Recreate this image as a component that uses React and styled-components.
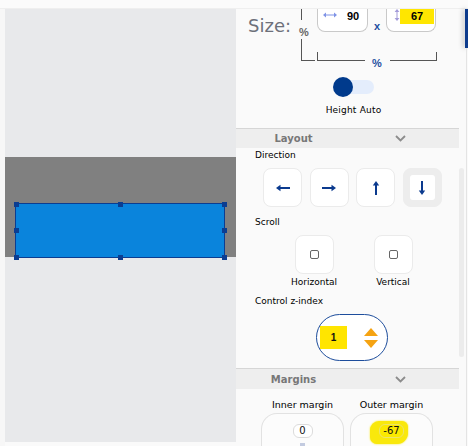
import React from 'react';
import styled, { createGlobalStyle } from 'styled-components';

const GlobalStyle = createGlobalStyle`
  html, body {
    margin: 0;
    padding: 0;
    background: #fafafa;
  }
  body {
    font-family: "DejaVu Sans", "Liberation Sans", sans-serif;
    color: #111;
  }
  * {
    box-sizing: border-box;
  }
`;

const Page = styled.div`
  width: 468px;
  height: 446px;
  display: flex;
  flex-direction: column;
  overflow: hidden;
  background: #fafafa;
`;

const TopBar = styled.div`
  flex: none;
  height: 9px;
  background: #fbfbfb;
  border-bottom: 1px solid #efefef;
`;

const Workspace = styled.div`
  flex: 1;
  display: flex;
  min-height: 0;
`;

const Gutter = styled.div`
  width: 5px;
  background: #f7f7f7;
`;

const Canvas = styled.div`
  width: 231px;
  height: 433px;
  padding-top: 148px;
  background: #e8e9eb;
`;

const Container = styled.div`
  height: 100px;
  padding: 46px 0 0 10px;
  background: #808080;
`;

const Selected = styled.div`
  position: relative;
  width: 210px;
  height: 55px;
  background: #0a84dc;
  border: 1px solid #0b3d91;
`;

const handleX = { l: 'left: -2px;', c: 'left: calc(50% - 2.5px);', r: 'right: -3px;' };
const handleY = { t: 'top: -2px;', m: 'top: calc(50% - 2.5px);', b: 'bottom: -3px;' };

const Handle = styled.span`
  position: absolute;
  width: 5px;
  height: 5px;
  background: #0b3d91;
  ${({ $x }) => handleX[$x]}
  ${({ $y }) => handleY[$y]}
`;

const Panel = styled.div`
  width: 229px;
  display: flex;
`;

const PanelBody = styled.div`
  width: 223px;
  display: flex;
  flex-direction: column;
  overflow: hidden;

  & > * {
    flex-shrink: 0;
  }
`;

const ScrollTrack = styled.div`
  width: 6px;
  padding-top: 159px;
`;

const ScrollThumb = styled.div`
  width: 5px;
  height: 189px;
  border-radius: 3px;
  background: #ececec;
`;

const RightEdge = styled.div`
  width: 3px;
  display: flex;
  flex-direction: column;
`;

const EdgeTab = styled.div`
  height: 39px;
  background: #0d3b8c;
  box-shadow: -2px 0 5px rgba(0, 0, 0, 0.25);
`;

const EdgeRest = styled.div`
  flex: 1;
  margin-left: 1px;
  border-left: 1px solid #e4e4e4;
`;

/* ---------- size ---------- */

const SizeSection = styled.section`
  height: 120px;
  padding-left: 12px;
  display: flex;
  flex-direction: column;
  border-bottom: 1px solid #d6d6d6;
`;

const SizeRow = styled.div`
  display: flex;
  align-items: flex-start;
`;

const SizeLabel = styled.div`
  width: 53px;
  margin-top: 8px;
  font-size: 18px;
  line-height: 18px;
  color: #6d707a;
`;

const BracketV = styled.div`
  width: 15px;
  height: 52px;
  display: flex;
  flex-direction: column;
`;

const VSeg = styled.div`
  height: ${({ $h }) => $h}px;
  border-left: 1px solid #555;
  ${({ $foot }) => $foot && 'border-bottom: 1px solid #555; width: 14px;'}
`;

const Unit = styled.div`
  font-family: "Liberation Sans", Arial, sans-serif;
  font-weight: bold;
  font-size: 11px;
  line-height: 12px;
  color: ${({ $blue }) => ($blue ? '#1d4f9f' : '#666')};
`;

const VUnit = styled(Unit)`
  height: 19px;
  padding-top: 6px;
  margin-left: -2px;
`;

const SizeFields = styled.div`
  width: 120px;
  margin-left: 1px;
  display: flex;
  flex-direction: column;
`;

const FieldsRow = styled.div`
  display: flex;
  height: 23px;
`;

const SizeField = styled.div`
  width: ${({ $w }) => $w}px;
  height: 23px;
  display: flex;
  align-items: flex-start;
  padding-left: ${({ $pad }) => $pad}px;
  background: #fff;
  border: 1px solid #c9c9c9;
  border-top: none;
  border-radius: 0 0 8px 8px;
`;

const FieldIcon = styled.svg`
  flex: none;
  margin-top: ${({ $top }) => $top}px;
`;

const FieldValue = styled.div`
  font-family: "Liberation Sans", Arial, sans-serif;
  font-weight: bold;
  font-size: 11px;
  line-height: 14px;
  color: #000;
  ${({ $mark }) =>
    $mark
      ? 'flex: 1; height: 15px; margin-right: 1px; text-align: center; background: #ffe600;'
      : 'margin-left: 10px;'}
`;

const Times = styled.div`
  width: 18px;
  padding-top: 11px;
  text-align: center;
  font-family: "Liberation Sans", Arial, sans-serif;
  font-weight: bold;
  font-size: 11px;
  line-height: 12px;
  color: #1d4f9f;
`;

const BracketH = styled.div`
  display: flex;
  align-items: flex-start;
  height: 15px;
  margin-top: 20px;
`;

const HSeg = styled.div`
  flex: 1;
  height: 9px;
  border-bottom: 1px solid #555;
  ${({ $side }) => `border-${$side}: 1px solid #555;`}
`;

const HUnit = styled(Unit)`
  width: 25px;
  padding-top: 5px;
  text-align: center;
`;

const Toggle = styled.div`
  align-self: center;
  margin: 13px 0 0 2px;
  width: 38px;
  height: 14px;
  display: flex;
  align-items: center;
  border-radius: 7px;
  background: #e4edfc;
`;

const Knob = styled.div`
  flex: none;
  width: 20px;
  height: 20px;
  margin-left: -3px;
  border-radius: 50%;
  background: #003a8c;
`;

const ToggleLabel = styled.div`
  align-self: center;
  margin-top: 11px;
  font-size: 9px;
  line-height: 11px;
  letter-spacing: 0.2px;
  color: #000;
`;

/* ---------- section headers ---------- */

const SectionHeader = styled.div`
  height: ${({ $h }) => $h}px;
  display: grid;
  grid-template-columns: 115px 1fr;
  align-items: center;
  background: #eeeeee;
`;

const HeaderTitle = styled.div`
  text-align: center;
  font-weight: bold;
  font-size: 10px;
  color: #777;
`;

const Chevron = styled.svg`
  justify-self: center;
  margin-right: 10px;
`;

/* ---------- layout ---------- */

const LayoutSection = styled.section`
  height: 221px;
  padding-top: 2px;
  display: flex;
  flex-direction: column;
  border-bottom: 1px solid #d6d6d6;
`;

const FieldLabel = styled.div`
  padding-left: 19px;
  margin-top: ${({ $top }) => $top || 0}px;
  font-size: 9px;
  line-height: 11px;
  color: #000;
`;

const DirectionRow = styled.div`
  display: flex;
  gap: 7.5px;
  margin: 7px 0 0 27px;
`;

const Tile = styled.button`
  width: 39px;
  height: 39px;
  padding: 0;
  display: flex;
  align-items: center;
  justify-content: center;
  border-radius: 8px;
  border: 1px solid ${({ $active }) => ($active ? '#ededed' : '#ebebeb')};
  background: ${({ $active }) => ($active ? '#ededed' : '#fff')};
  cursor: pointer;
`;

const TileInner = styled.span`
  width: 25px;
  height: 25px;
  display: flex;
  align-items: center;
  justify-content: center;
  border-radius: 3px;
  background: #fff;
`;

const ScrollRow = styled.div`
  display: flex;
  gap: 19px;
  margin: 7px 0 0 48px;
`;

const ScrollOption = styled.div`
  width: 60px;
  display: flex;
  flex-direction: column;
  align-items: center;
`;

const CheckBox = styled.span`
  width: 9px;
  height: 9px;
  border: 1px solid #666;
  border-radius: 2px;
  background: #fff;
`;

const OptionLabel = styled.div`
  margin-top: 3px;
  font-size: 9px;
  line-height: 11px;
  color: #000;
`;

const Stepper = styled.div`
  width: 72px;
  height: 47px;
  margin: 7px 0 0 80px;
  padding: 0 0 0 3px;
  display: flex;
  align-items: center;
  border: 1.5px solid #1d4d9c;
  border-radius: 24px;
  background: #fff;
`;

const StepValue = styled.div`
  width: 27px;
  height: 23px;
  display: flex;
  align-items: center;
  justify-content: center;
  background: #ffe500;
  font-family: "Liberation Sans", Arial, sans-serif;
  font-weight: bold;
  font-size: 10px;
  color: #111;
`;

const StepArrows = styled.svg`
  margin-left: 17px;
`;

/* ---------- margins ---------- */

const MarginsRow = styled.div`
  display: grid;
  grid-template-columns: 83px 83px;
  gap: 6px;
  padding: 10px 0 0 25px;
`;

const MarginCol = styled.div`
  display: flex;
  flex-direction: column;
  align-items: center;
`;

const MarginLabel = styled.div`
  font-size: 9.5px;
  line-height: 11px;
  color: #000;
  margin-bottom: 3px;
`;

const MarginBox = styled.div`
  width: 83px;
  height: 40px;
  padding-top: ${({ $top }) => $top}px;
  display: flex;
  flex-direction: column;
  align-items: center;
  border: 1px solid #e2e2e2;
  border-bottom: none;
  border-radius: 16px 16px 0 0;
  background: #fcfcfc;
`;

const ValuePill = styled.div`
  min-width: 20px;
  height: 14px;
  padding: 0 3px;
  text-align: center;
  font-size: 10px;
  line-height: 12px;
  border: 1px solid #dcdcdc;
  border-radius: 6px;
  background: #fff;
`;

const Tick = styled.div`
  width: 5px;
  height: 5px;
  margin-top: 5px;
  background: #c3cbe0;
`;

const Highlight = styled.div`
  padding: 3px 4px 6px 9px;
  margin-left: -5px;
  border-radius: 9px 6px 11px 7px;
  background: #f9e80c;
  box-shadow: 0 0 2px #f9e80c;

  ${ValuePill} {
    background: #fbe900;
    border-color: #ece46a;
  }
`;

const arrowShapes = {
  left: { line: 'M4.5 8H15', head: '1,8 5.5,4.8 5.5,11.2' },
  right: { line: 'M1 8H11.5', head: '15,8 10.5,4.8 10.5,11.2' },
  up: { line: 'M8 4.5V15', head: '8,1 4.8,5.5 11.2,5.5' },
  down: { line: 'M8 1V11.5', head: '8,15 4.8,10.5 11.2,10.5' }
};

const DirArrow = ({ dir }) => {
  const { line, head } = arrowShapes[dir];
  return (
    <svg width="16" height="16" viewBox="0 0 16 16">
      <path d={line} stroke="#0b3a8e" strokeWidth="2" fill="none" />
      <polygon points={head} fill="#0b3a8e" />
    </svg>
  );
};

const HeaderChevron = () => (
  <Chevron width="11" height="7" viewBox="0 0 11 7">
    <polyline points="1,1 5.5,5.5 10,1" fill="none" stroke="#8c8c8c" strokeWidth="1.8" />
  </Chevron>
);

const directions = ['left', 'right', 'up', 'down'];
const handles = [
  ['l', 't'], ['c', 't'], ['r', 't'],
  ['l', 'm'], ['r', 'm'],
  ['l', 'b'], ['c', 'b'], ['r', 'b']
];

const App = () => {
  const active = 'down';

  return (
    <Page>
      <GlobalStyle />
      <TopBar />
      <Workspace>
        <Gutter />
        <Canvas>
          <Container>
            <Selected>
              {handles.map(([x, y]) => (
                <Handle key={x + y} $x={x} $y={y} />
              ))}
            </Selected>
          </Container>
        </Canvas>

        <Panel>
          <PanelBody>
            <SizeSection>
              <SizeRow>
                <SizeLabel>Size:</SizeLabel>
                <BracketV>
                  <VSeg $h={11} />
                  <VUnit>%</VUnit>
                  <VSeg $h={22} $foot />
                </BracketV>
                <SizeFields>
                  <FieldsRow>
                    <SizeField $w={51} $pad={5}>
                      <FieldIcon $top={3} width="14" height="6" viewBox="0 0 14 6">
                        <path d="M2.5 3H11.5" stroke="#7f93e6" strokeWidth="1" />
                        <polygon points="0,3 3,0.6 3,5.4" fill="#7f93e6" />
                        <polygon points="14,3 11,0.6 11,5.4" fill="#7f93e6" />
                      </FieldIcon>
                      <FieldValue>90</FieldValue>
                    </SizeField>
                    <Times>x</Times>
                    <SizeField $w={50} $pad={7}>
                      <FieldIcon $top={0} width="6" height="12" viewBox="0 0 6 12">
                        <path d="M3 2.5V9.5" stroke="#a39bd9" strokeWidth="1" />
                        <polygon points="3,0 0.6,3 5.4,3" fill="#a39bd9" />
                        <polygon points="3,12 0.6,9 5.4,9" fill="#a39bd9" />
                      </FieldIcon>
                      <FieldValue $mark>67</FieldValue>
                    </SizeField>
                  </FieldsRow>
                  <BracketH>
                    <HSeg $side="left" />
                    <HUnit $blue>%</HUnit>
                    <HSeg $side="right" />
                  </BracketH>
                </SizeFields>
              </SizeRow>
              <Toggle>
                <Knob />
              </Toggle>
              <ToggleLabel>Height Auto</ToggleLabel>
            </SizeSection>

            <SectionHeader $h={19}>
              <HeaderTitle>Layout</HeaderTitle>
              <HeaderChevron />
            </SectionHeader>

            <LayoutSection>
              <FieldLabel>Direction</FieldLabel>
              <DirectionRow>
                {directions.map(dir => (
                  <Tile key={dir} $active={dir === active}>
                    {dir === active ? (
                      <TileInner>
                        <DirArrow dir={dir} />
                      </TileInner>
                    ) : (
                      <DirArrow dir={dir} />
                    )}
                  </Tile>
                ))}
              </DirectionRow>

              <FieldLabel $top={10}>Scroll</FieldLabel>
              <ScrollRow>
                {['Horizontal', 'Vertical'].map(label => (
                  <ScrollOption key={label}>
                    <Tile>
                      <CheckBox />
                    </Tile>
                    <OptionLabel>{label}</OptionLabel>
                  </ScrollOption>
                ))}
              </ScrollRow>

              <FieldLabel $top={8}>Control z-index</FieldLabel>
              <Stepper>
                <StepValue>1</StepValue>
                <StepArrows width="14" height="20" viewBox="0 0 14 20">
                  <polygon points="7,0 14,8 0,8" fill="#f5a312" />
                  <polygon points="0,12 14,12 7,20" fill="#f5a312" />
                </StepArrows>
              </Stepper>
            </LayoutSection>

            <SectionHeader $h={20}>
              <HeaderTitle>Margins</HeaderTitle>
              <HeaderChevron />
            </SectionHeader>

            <MarginsRow>
              <MarginCol>
                <MarginLabel>Inner margin</MarginLabel>
                <MarginBox $top={10}>
                  <ValuePill>0</ValuePill>
                  <Tick />
                </MarginBox>
              </MarginCol>
              <MarginCol>
                <MarginLabel>Outer margin</MarginLabel>
                <MarginBox $top={7}>
                  <Highlight>
                    <ValuePill>-67</ValuePill>
                  </Highlight>
                </MarginBox>
              </MarginCol>
            </MarginsRow>
          </PanelBody>
          <ScrollTrack>
            <ScrollThumb />
          </ScrollTrack>
        </Panel>

        <RightEdge>
          <EdgeTab />
          <EdgeRest />
        </RightEdge>
      </Workspace>
    </Page>
  );
};

export default App;
